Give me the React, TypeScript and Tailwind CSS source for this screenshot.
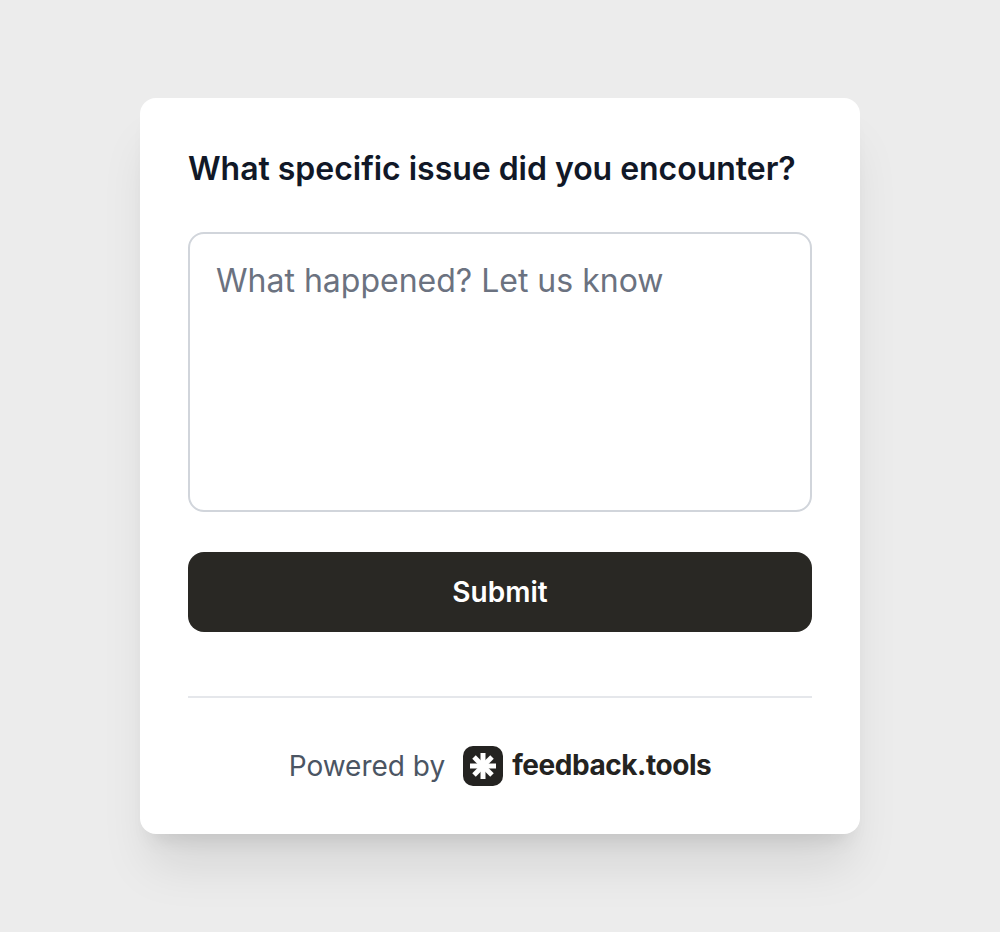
export default function App() {
  return (
    <div className="flex min-h-screen items-center justify-center bg-[#ececec] font-['Inter',sans-serif]">
      <div className="w-[720px] rounded-2xl bg-white px-12 pt-[51px] pb-[48px] shadow-[0_40px_50px_-10px_rgba(0,0,0,0.1),0_16px_20px_-12px_rgba(0,0,0,0.1)]">
        <h1 className="text-[32px] leading-[40px] font-semibold tracking-[-0.03px] text-[#111827]">
          What specific issue did you encounter?
        </h1>
        <textarea
          placeholder="What happened? Let us know"
          className="mt-[43px] block h-[280px] w-full resize-none rounded-2xl border-2 border-[#d1d5db] px-[26px] pt-[25px] pb-[23px] text-[32px] leading-[44px] text-[#111827] outline-none placeholder:text-[#6b7280]"
        />
        <button className="mt-10 flex h-20 w-full items-center justify-center rounded-2xl bg-[#292824] text-[28px] font-semibold text-white">
          Submit
        </button>
        <div className="mt-16 border-t-2 border-[#e5e7eb] pt-12">
          <div className="flex items-center justify-center">
            <span className="text-[28px] leading-10 text-[#4b5563]">Powered by</span>
            <svg className="ml-[18px]" width="40" height="40" viewBox="0 0 40 40">
              <rect width="40" height="40" rx="10" fill="#242321" />
              <g stroke="#fff" strokeWidth="5">
                <path d="M20 7V33" />
                <path d="M7 20H33" />
                <path d="M11 11L29 29" />
                <path d="M29 11L11 29" />
              </g>
              <circle cx="20" cy="20" r="5" fill="#fff" />
            </svg>
            <span className="ml-[9px] mb-[2px] text-[28px] leading-[38px] font-bold tracking-[-0.45px] text-[#242321]">feedback.tools</span>
          </div>
        </div>
      </div>
    </div>
  );
}
